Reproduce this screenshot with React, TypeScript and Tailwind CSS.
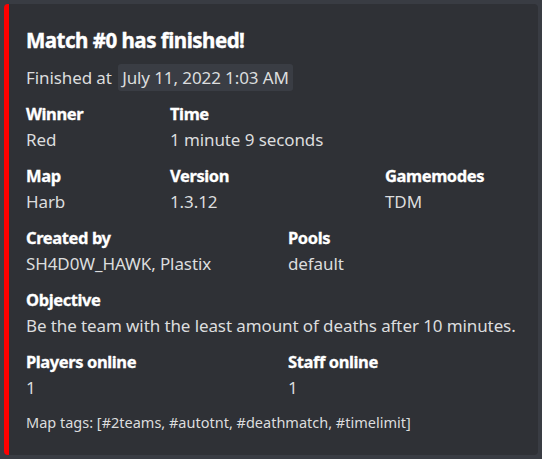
import React from 'react';

interface Field {
  name: string;
  value: string;
}

function FieldBlock({ name, value }: Field) {
  return (
    <div className="min-w-0">
      <div className="text-[16.5px] leading-[22px] font-bold tracking-[-0.4px] text-white [-webkit-text-stroke:0.3px_#ffffff]">
        {name}
      </div>
      <div className="mt-[4px] text-[17px] leading-[22px] tracking-[-0.1px] text-[#dcddde]">{value}</div>
    </div>
  );
}

export default function App() {
  return (
    <div
      className="w-[542px] h-[459px] bg-[#393c43] p-[4px]"
      style={{ fontFamily: '"Noto Sans", "Open Sans", sans-serif' }}
    >
      <div className="h-[451px] rounded-[4px] border-l-[5px] border-[#ff0000] bg-[#2f3136] pl-[17px] pr-[20px] pt-[22px]">
        {/* Title */}
        <div className="text-[20.5px] leading-[28px] font-bold tracking-[-0.5px] text-white [-webkit-text-stroke:0.4px_#ffffff]">
          Match #0 has finished!
        </div>

        {/* Description */}
        <div className="mt-[12px] text-[17px] leading-[24px] tracking-[-0.1px] text-[#dcddde]">
          Finished at{' '}
          <span className="ml-[2px] rounded-[3px] bg-[#3a3d44] px-[4px] py-[2px]">July 11, 2022 1:03 AM</span>
        </div>

        {/* Fields */}
        <div className="mt-[13px] flex flex-col gap-[14px]">
          <div className="grid grid-cols-[144px_1fr]">
            <FieldBlock name="Winner" value="Red" />
            <FieldBlock name="Time" value="1 minute 9 seconds" />
          </div>
          <div className="grid grid-cols-[144px_215px_1fr]">
            <FieldBlock name="Map" value="Harb" />
            <FieldBlock name="Version" value="1.3.12" />
            <FieldBlock name="Gamemodes" value="TDM" />
          </div>
          <div className="grid grid-cols-[262px_1fr]">
            <FieldBlock name="Created by" value="SH4D0W_HAWK, Plastix" />
            <FieldBlock name="Pools" value="default" />
          </div>
          <FieldBlock name="Objective" value="Be the team with the least amount of deaths after 10 minutes." />
          <div className="grid grid-cols-[262px_1fr]">
            <FieldBlock name="Players online" value="1" />
            <FieldBlock name="Staff online" value="1" />
          </div>
        </div>

        {/* Footer */}
        <div className="mt-[13px] text-[14.5px] leading-[20px] text-[#dcddde]">
          Map tags: [#2teams, #autotnt, #deathmatch, #timelimit]
        </div>
      </div>
    </div>
  );
}
